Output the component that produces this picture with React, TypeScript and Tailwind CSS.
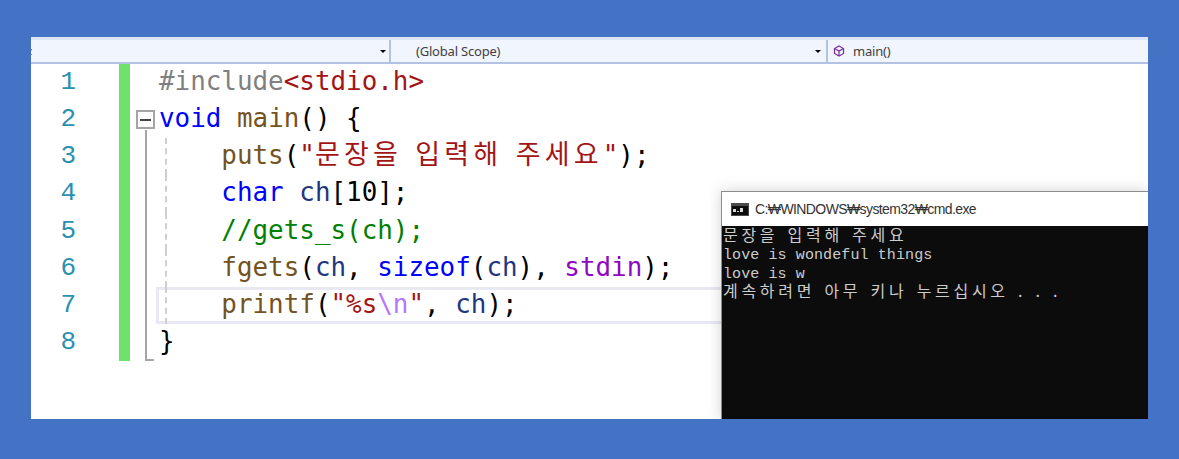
const mono = "font-['DejaVu_Sans_Mono',monospace]";

const kw = "text-[#0000ff]";
const fn = "text-[#74531f]";
const str = "text-[#a31515]";
const v = "text-[#1f377f]";

function CodeLine({ n, fold, guide, active, children }: { n: number; fold?: React.ReactNode; guide?: boolean; active?: boolean; children: React.ReactNode }) {
  return (
    <div className="flex h-[37.125px]">
      <div className="w-[43px] shrink-0 text-right text-[26px] leading-[36px] tracking-[-2px] text-[#2b91af] font-['Liberation_Mono',monospace]">{n}</div>
      <div className="w-[45px] shrink-0" />
      <div className="w-[11px] shrink-0 bg-[#6ee26c]" />
      <div className="relative w-[29px] shrink-0">{fold}</div>
      <div className={`relative flex-1 ${mono} whitespace-pre text-[25.9px] leading-[35.5px] ${active ? "-ml-[3px] pl-[3px] outline-[3px] -outline-offset-[3px] outline-[#e9e9f4]" : ""}`}>
        {guide && <div className={`absolute bottom-0 top-0 w-0 border-l-2 border-dashed border-[#cfcfcf] ${active ? "left-[9px]" : "left-[6px]"}`} />}
        {children}
      </div>
    </div>
  );
}

const foldLine = <div className="absolute left-[15px] top-0 bottom-0 w-[2px] bg-[#a5a5a5]" />;
const hangulCode = "font-['Noto_Sans_CJK_KR',sans-serif] text-[27px] leading-[0] tracking-[4.2px] [word-spacing:3px]";
const hangulCmd = "-mt-[1px] mb-[1px] font-['Noto_Sans_CJK_KR',sans-serif] text-[16px] tracking-[3.7px] [word-spacing:2px]";

export default function App() {
  return (
    <div className="flex h-[459px] w-[1179px] bg-[#4472c4] pb-[40px] pl-[31px] pr-[31px] pt-[37px]">
      <div className="relative flex-1 overflow-hidden bg-white">
        {/* toolbar */}
        <div className="flex h-[27px] border-b-2 border-t-[3px] border-b-[#b3c2e0] border-t-[#dde5f6] bg-[#f1f5fe] font-['Noto_Sans',sans-serif] text-[13px] leading-[20px] tracking-[-0.2px] text-[#3f3f3f]">
          <div className="flex w-[358px] items-center justify-end pr-[3px]">
            <span className="mr-auto -ml-[4px] text-[11px]">z</span>
            <span className="h-0 w-0 border-x-[3px] border-t-[3px] border-x-transparent border-t-black" />
          </div>
          <div className="w-[2px] bg-[#b3c2e0]" />
          <div className="flex w-[435px] items-center justify-between pl-[25px] pr-[5px]">
            <span>(Global Scope)</span>
            <span className="h-0 w-0 border-x-[3px] border-t-[3px] border-x-transparent border-t-black" />
          </div>
          <div className="w-[2px] bg-[#b3c2e0]" />
          <div className="flex flex-1 items-center pl-[5px]">
            <svg width="12" height="12" viewBox="0 0 12 12" fill="none" stroke="#7b2f9e" strokeWidth="1.2">
              <path d="M6 1 10.5 3.5 10.5 8.5 6 11 1.5 8.5 1.5 3.5Z" />
              <path d="M1.5 3.5 6 6 10.5 3.5M6 6V11" />
            </svg>
            <span className="ml-[8px]">main()</span>
          </div>
        </div>

        {/* editor */}
        <div className="flex flex-col">
          <CodeLine n={1}>
            <span className="text-[#808080]">#include</span>
            <span className={str}>&lt;stdio.h&gt;</span>
          </CodeLine>
          <CodeLine
            n={2}
            fold={
              <>
                <div className="absolute left-[6px] top-[9px] flex h-[19px] w-[19px] items-center justify-center border-2 border-[#a5a5a5] bg-white">
                  <div className="h-[2px] w-[11px] bg-[#444]" />
                </div>
                <div className="absolute left-[15px] top-[29px] bottom-0 w-[2px] bg-[#a5a5a5]" />
              </>
            }
          >
            <span className={kw}>void</span> <span className={fn}>main</span>() {"{"}
          </CodeLine>
          <CodeLine n={3} fold={foldLine} guide>
            {"    "}<span className={fn}>puts</span>(<span className={str}>"<span className={hangulCode}>문장을 입력해 주세요</span>"</span>);
          </CodeLine>
          <CodeLine n={4} fold={foldLine} guide>
            {"    "}<span className={kw}>char</span> <span className={v}>ch</span>[10];
          </CodeLine>
          <CodeLine n={5} fold={foldLine} guide>
            {"    "}<span className="text-[#008000]">//gets_s(ch);</span>
          </CodeLine>
          <CodeLine n={6} fold={foldLine} guide>
            {"    "}<span className={fn}>fgets</span>(<span className={v}>ch</span>, <span className={kw}>sizeof</span>(<span className={v}>ch</span>), <span className="text-[#8f08c4]">stdin</span>);
          </CodeLine>
          <CodeLine n={7} fold={foldLine} guide active>
            {"    "}<span className={fn}>printf</span>(<span className={str}>"%s</span><span className="text-[#b776fb]">\n</span><span className={str}>"</span>, <span className={v}>ch</span>);
          </CodeLine>
          <CodeLine
            n={8}
            fold={
              <>
                <div className="absolute left-[15px] top-0 bottom-0 w-[2px] bg-[#a5a5a5]" />
                <div className="absolute bottom-0 left-[15px] h-[2px] w-[9px] bg-[#a5a5a5]" />
              </>
            }
          >
            {"}"}
          </CodeLine>
        </div>

        {/* console window on top */}
        <div className="absolute bottom-0 left-[690px] right-0 top-[154px] flex flex-col border-l border-t border-[#8c8c8c] shadow-[0_0_14px_rgba(0,0,0,0.18)]">
          <div className="flex h-[34px] shrink-0 items-center bg-white pl-[9px]">
            <svg width="18" height="13" viewBox="0 0 18 13">
              <rect width="18" height="13" fill="#4a4a4a" />
              <rect x="1" y="3" width="16" height="9" fill="#0c0c0c" />
              <rect x="2" y="6" width="3" height="3" fill="#d8d8d8" />
              <rect x="6" y="8" width="2" height="1" fill="#d8d8d8" />
              <rect x="9" y="5" width="3" height="4" fill="#d8d8d8" />
            </svg>
            <span className="ml-[6px] font-['Liberation_Sans','Noto_Sans_CJK_KR',sans-serif] text-[14px] tracking-[-0.6px] text-[#333]">C:₩WINDOWS₩system32₩cmd.exe</span>
          </div>
          <div className="flex-1 overflow-hidden whitespace-pre bg-[#0c0c0c] pl-[1px] font-['Liberation_Mono',monospace] text-[15px] leading-[18.6px] tracking-[0.1px] text-[#cccccc]">
            <div className={hangulCmd}>문장을 입력해 주세요</div>
            <div className="mt-[3px] -mb-[3px]">love is wondeful things</div>
            <div className="mt-[4px] -mb-[4px]">love is w</div>
            <div className={hangulCmd}>계속하려면 아무 키나 누르십시오 . . .</div>
          </div>
        </div>
      </div>
    </div>
  );
}
